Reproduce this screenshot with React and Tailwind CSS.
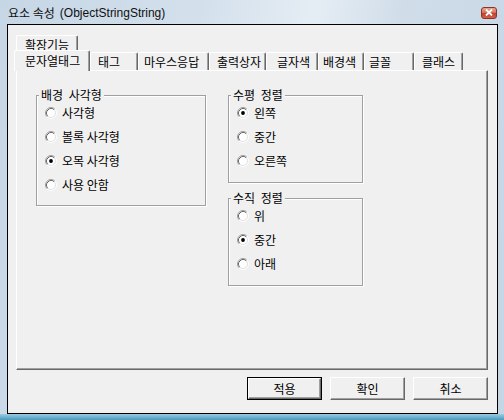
import React from 'react';

// 탭 목록: 위쪽 줄과 아래쪽 줄
const backRow = [{ label: '확장기능', w: 'w-[62px]' }];
const frontRow = [
  { label: '문자열태그', w: 'w-[76px]', pl: 'pl-[10px]', active: true },
  { label: '태그', w: 'w-[48px]', pl: 'pl-[7px]' },
  { label: '마우스응답', w: 'w-[71px]', pl: 'pl-[5px]' },
  { label: '출력상자', w: 'w-[57px]', pl: 'pl-[7px]' },
  { label: '글자색', w: 'w-[52px]', pl: 'pl-[10px]' },
  { label: '배경색', w: 'w-[46px]', pl: 'pl-[4px]' },
  { label: '글꼴', w: 'w-[50px]', pl: 'pl-[4px]' },
  { label: '클래스', w: 'w-[49px]', pl: 'pl-[7px]' },
];

// 클래식 라디오 버튼 그림
function Radio({ checked }) {
  return (
    <svg width="12" height="12" viewBox="0 0 12 12" className="shrink-0">
      <circle cx="6" cy="6" r="4.5" fill="#fff" />
      <path d="M2.11 9.89A5.5 5.5 0 0 1 9.89 2.11" stroke="#a0a0a0" fill="none" />
      <path d="M2.11 9.89A5.5 5.5 0 0 0 9.89 2.11" stroke="#fff" fill="none" />
      <path d="M2.82 9.18A4.5 4.5 0 0 1 9.18 2.82" stroke="#696969" fill="none" />
      <path d="M2.82 9.18A4.5 4.5 0 0 0 9.18 2.82" stroke="#e3e3e3" fill="none" />
      {checked && <circle cx="6" cy="6" r="1.9" fill="#000" />}
    </svg>
  );
}

function Option({ label, checked }) {
  return (
    <div className="flex items-center h-[24px] pl-[8px] gap-[5px]">
      <Radio checked={checked} />
      <span className="leading-[14px]">{label}</span>
    </div>
  );
}

// 그룹 상자 (에칭 테두리)
function Group({ title, className, children }) {
  return (
    <div className={`relative border border-[#a0a0a0] shadow-[inset_1px_1px_0_#fff,1px_1px_0_#fff] pt-[5px] ${className}`}>
      <span className="absolute -top-[8px] left-[2px] bg-[#f0f0f0] px-[2px] leading-[14px] [word-spacing:3px]">
        {title}
      </span>
      {children}
    </div>
  );
}

function Tab({ label, w, pl, active }) {
  if (active) {
    return (
      <div className={`${w} ${pl} relative z-10 -ml-[2px] -mt-[2px] h-[21px] bg-[#f0f0f0] border-l border-t border-r border-l-white border-t-white border-r-[#696969] rounded-t-[2px] shadow-[inset_-1px_0_0_#a0a0a0] flex items-center pb-[1px]`}>
        {label}
      </div>
    );
  }
  return (
    <div className={`${w} ${pl} h-[18px] border-l border-t border-r border-l-white border-t-white border-r-[#696969] rounded-t-[2px] shadow-[inset_-1px_0_0_#a0a0a0] flex items-center pt-[1px]`}>
      {label}
    </div>
  );
}

function Button({ label, primary }) {
  return (
    <button className={`w-[75px] h-[23px] ${primary ? 'border border-black' : ''}`}>
      <div className="h-full w-full border border-t-white border-l-white border-r-[#696969] border-b-[#696969] shadow-[inset_-1px_-1px_0_#a0a0a0] flex items-center justify-center bg-[#f0f0f0]">
        {label}
      </div>
    </button>
  );
}

export default function App() {
  return (
    <div className="w-[504px] h-[420px] flex flex-col bg-[linear-gradient(100deg,#c6d6e5_0%,#d3e0ec_35%,#e5edf4_55%,#d0dde9_70%,#c4d5e4_100%)] text-[12px] text-black font-['Noto_Sans_CJK_KR',sans-serif] overflow-hidden">
      {/* 제목 표시줄 */}
      <div className="h-[24px] shrink-0 flex items-center justify-between pl-[8px] pr-[7px] pt-[1px]">
        <div className="flex items-center gap-[5px] leading-[14px] text-[#101010]">
          <span>요소 속성</span>
          <span className="font-['Liberation_Sans','Noto_Sans_CJK_KR',sans-serif]">(ObjectStringString)</span>
        </div>
        <div className="w-[16px] h-[12px] rounded-[3px] border border-[#8a3326] bg-[linear-gradient(to_bottom,#e9a893_0%,#d9705a_45%,#c3412c_55%,#d0604a_100%)] flex items-center justify-center">
          <svg width="8" height="7" viewBox="0 0 8 7">
            <path d="M1 0.5L7 6.5M7 0.5L1 6.5" stroke="#fff" strokeWidth="1.8" />
          </svg>
        </div>
      </div>

      {/* 대화상자 본문 */}
      <div className="flex-1 ml-[7px] mr-[6px] border border-black bg-[#f0f0f0] pt-[10px] pl-[8px] flex flex-col">
        <div className="w-[472px] flex flex-col">
          <div className="flex h-[17px]">
            {backRow.map(t => (
              <div key={t.label} className={`${t.w} h-[17px] border-l border-t border-r border-l-white border-t-white border-r-[#696969] rounded-t-[2px] shadow-[inset_-1px_0_0_#a0a0a0] flex items-center justify-center pt-[1px]`}>
                {t.label}
              </div>
            ))}
          </div>
          <div className="flex items-start h-[18px]">
            {frontRow.map(t => (
              <Tab key={t.label} {...t} />
            ))}
          </div>
          <div className="h-[300px] border border-t-white border-l-white border-r-[#696969] border-b-[#696969] shadow-[inset_-1px_-1px_0_#a0a0a0] pl-[19px] pt-[24px] flex items-start gap-[22px]">
            <Group title="배경 사각형" className="w-[170px] h-[111px]">
              <Option label="사각형" />
              <Option label="볼록 사각형" />
              <Option label="오목 사각형" checked />
              <Option label="사용 안함" />
            </Group>
            <div className="flex flex-col gap-[15px]">
              <Group title="수평 정렬" className="w-[135px] h-[88px]">
                <Option label="왼쪽" checked />
                <Option label="중간" />
                <Option label="오른쪽" />
              </Group>
              <Group title="수직 정렬" className="w-[135px] h-[88px]">
                <Option label="위" />
                <Option label="중간" checked />
                <Option label="아래" />
              </Group>
            </div>
          </div>
        </div>

        {/* 버튼 줄 */}
        <div className="w-[472px] mt-[7px] flex justify-end gap-[8px]">
          <Button label="적용" primary />
          <Button label="확인" />
          <Button label="취소" />
        </div>
      </div>

      {/* 아래쪽 창틀 */}
      <div className="h-[6px] shrink-0 bg-[linear-gradient(to_bottom,#9ccbe0,#4a9bbd)]" />
    </div>
  );
}
